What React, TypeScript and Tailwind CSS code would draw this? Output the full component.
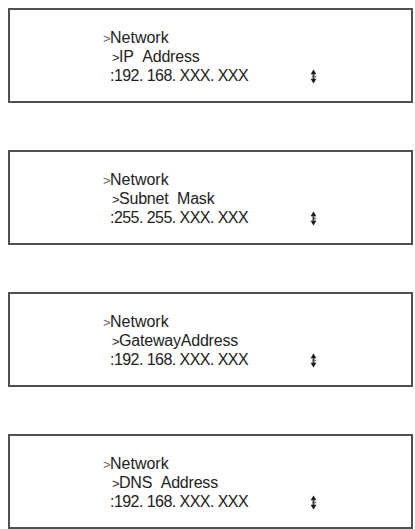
import React from "react";

type Entry = { label: string; value: string };

const entries: Entry[] = [
  { label: "IP\u00a0\u00a0Address", value: ":192. 168. XXX. XXX" },
  { label: "Subnet\u00a0\u00a0Mask", value: ":255. 255. XXX. XXX" },
  { label: "GatewayAddress", value: ":192. 168. XXX. XXX" },
  { label: "DNS\u00a0\u00a0Address", value: ":192. 168. XXX. XXX" },
];

// little up/down scroll marker shown at the right of the value line
function ScrollMark() {
  return (
    <svg width="7" height="15" viewBox="0 0 7 15" className="shrink-0">
      <path d="M3.5 0.5 L6.4 5.2 L0.6 5.2 Z" fill="#1a1a1a" />
      <rect x="2.5" y="5.2" width="2" height="4.6" fill="#3a3a3a" />
      <rect x="4.8" y="6.8" width="1.5" height="1.5" fill="#777" />
      <path d="M3.5 14.5 L6.4 9.8 L0.6 9.8 Z" fill="#1a1a1a" />
    </svg>
  );
}

function Chevron({ light }: { light?: boolean }) {
  return (
    <span
      className={`inline-block w-[7px] text-[13px] ${light ? "text-[#666]" : "text-[#2a2a2a]"}`}
    >
      &gt;
    </span>
  );
}

function LcdPanel({ entry }: { entry: Entry }) {
  return (
    <div className="h-[95px] border-2 border-[#505050] bg-white pt-[19px] pl-[93px] text-[16px] leading-[18px] text-[#222]">
      <div className="flex items-baseline">
        <Chevron light />
        <span>Network</span>
      </div>
      <div className="flex items-baseline pl-[9px]">
        <Chevron />
        <span className="tracking-[-0.2px]">{entry.label}</span>
      </div>
      <div className="flex items-center pl-[7px]">
        <span className="w-[200px] whitespace-pre tracking-[-0.55px]">
          {entry.value}
        </span>
        <ScrollMark />
      </div>
    </div>
  );
}

export default function App() {
  return (
    <div
      className="flex min-h-[529px] w-[415px] flex-col gap-[47px] bg-white pt-2 pl-2 pr-[2px]"
      style={{ fontFamily: '"Liberation Sans", Arial, sans-serif' }}
    >
      {entries.map((e) => (
        <LcdPanel key={e.label} entry={e} />
      ))}
    </div>
  );
}
